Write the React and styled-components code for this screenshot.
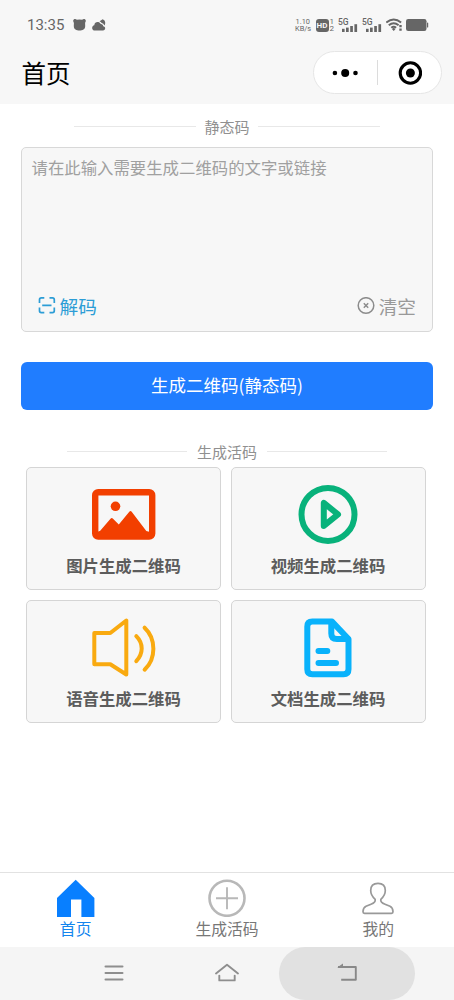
import React, { useState } from "react";
import styled, { createGlobalStyle } from "styled-components";

const GlobalStyle = createGlobalStyle`
  * {
    box-sizing: border-box;
  }

  body {
    margin: 0;
    background: #fff;
    font-family: "Noto Sans CJK SC", sans-serif;
  }

  button {
    padding: 0;
    border: 0;
    background: none;
    font-family: inherit;
  }

  svg {
    display: block;
    flex: none;
  }
`;

const Screen = styled.div`
  display: flex;
  flex-direction: column;
  width: 454px;
  height: 1000px;
  overflow: hidden;
  background: #fff;
`;

// Header
const Header = styled.header`
  height: 104px;
  background: #f7f7f7;
`;

const StatusBar = styled.div`
  display: flex;
  align-items: center;
  height: 50px;
  padding: 0 25px 0 27px;
  color: #666;
  font-family: Roboto, sans-serif;
`;

const Clock = styled.span`
  width: 46px;
  font-size: 15px;
  line-height: 18px;
`;

const CloudIcon = styled.svg`
  margin-left: 6px;
`;

const StatusRight = styled.div`
  display: flex;
  align-items: center;
  margin-left: auto;
`;

const Speed = styled.div`
  width: 20.5px;
  padding-right: 5px;
  font-size: 7.4px;
  line-height: 7px;
  text-align: center;
`;

const HdBadge = styled.span`
  width: 13px;
  height: 13px;
  border-radius: 3px;
  background: #666;
  color: #f7f7f7;
  font-size: 8px;
  font-weight: 700;
  line-height: 13.5px;
  text-align: center;
`;

const SimNumbers = styled.div`
  width: 9.5px;
  padding-left: 1px;
  font-size: 8px;
  line-height: 7px;
`;

const Signal = styled.div`
  width: 24px;
  height: 15px;
  font-size: 8.5px;
  font-weight: 500;
  line-height: 8px;

  svg {
    margin: -2px 0 0 3.5px;
  }
`;

const TitleBar = styled.div`
  display: flex;
  align-items: center;
  justify-content: space-between;
  height: 45px;
  padding: 0 12.5px 0 21.5px;
`;

const Title = styled.h1`
  margin: 0;
  color: #000;
  font-size: 24.5px;
  font-weight: 400;
  line-height: 36px;
`;

const Capsule = styled.div`
  display: flex;
  align-items: center;
  width: 129px;
  height: 43px;
  border: 1px solid #e6e6e6;
  border-radius: 22px;
  background: #fff;
`;

const CapsuleButton = styled.button`
  display: flex;
  align-items: center;
  justify-content: center;
  flex: 1;
  height: 41px;
`;

const CapsuleDivider = styled.span`
  width: 1px;
  height: 25px;
  background: #dcdcdc;
`;

// Content
const Content = styled.main`
  flex: 1;
  padding: 12px 21px 0;
`;

const SectionTitle = styled.div`
  display: flex;
  align-items: center;
  justify-content: center;
  gap: ${({ $gap }) => $gap}px;
  height: 22px;
  color: #909090;
  font-size: 15px;
  line-height: 22px;

  &::before,
  &::after {
    content: "";
    width: ${({ $line }) => $line}px;
    height: 1px;
    margin-top: -1px;
    background: #e8e8e8;
  }
`;

const InputBox = styled.section`
  display: flex;
  flex-direction: column;
  height: 185px;
  margin-top: 9px;
  border: 1.4px solid #d8d8d8;
  border-radius: 5px;
  background: #f7f7f7;
`;

const TextInput = styled.textarea`
  flex: 1;
  padding: 7px 9.5px;
  border: 0;
  outline: 0;
  resize: none;
  background: transparent;
  color: #333;
  font-family: inherit;
  font-size: 16.4px;
  line-height: 24px;

  &::placeholder {
    color: #a0a0a0;
    opacity: 1;
  }
`;

const InputActions = styled.div`
  display: flex;
  justify-content: space-between;
  height: 39px;
  padding: 0 16px 0 15.5px;
`;

const ActionButton = styled.button`
  display: flex;
  align-items: center;
  gap: 4px;
  height: 28px;
  color: ${({ $color }) => $color};
  font-size: 18.7px;
  line-height: 28px;
`;

const SubmitButton = styled.button`
  display: block;
  width: 412px;
  height: 48px;
  margin: 30px 0 31px;
  padding-bottom: 2px;
  border-radius: 6px;
  background: #207dff;
  color: #fff;
  font-size: 17.5px;
  line-height: 26px;
`;

const CardGrid = styled.section`
  display: grid;
  grid-template-columns: 195px 195px;
  grid-auto-rows: 123px;
  gap: 10px 9.5px;
  margin-top: 4px;
  padding-left: 5px;
`;

const Card = styled.button`
  display: flex;
  flex-direction: column;
  align-items: center;
  padding-top: 14px;
  border: 1.4px solid #d5d5d5;
  border-radius: 5px;
  background: #f7f7f7;
  color: #5c5c5c;
  font-size: 16.4px;
  font-weight: 700;
  line-height: 24px;

  svg {
    margin-bottom: 7px;
  }
`;

// Bottom tabs
const TabBar = styled.nav`
  display: grid;
  grid-template-columns: repeat(3, 1fr);
  height: 75px;
  border-top: 1px solid #e2e2e2;
  background: #fff;
`;

const Tab = styled.button`
  display: flex;
  flex-direction: column;
  align-items: center;
  padding-top: 6px;
  color: ${({ $active }) => ($active ? "#1485ee" : "#777")};
  font-size: 15.8px;
  line-height: 23px;
`;

// System navigation
const SystemNav = styled.div`
  display: flex;
  align-items: center;
  height: 53px;
  padding-left: 52px;
  background: #f5f5f5;
`;

const SystemButton = styled.button`
  display: flex;
  align-items: center;
  justify-content: center;
  width: ${({ $width }) => $width}px;
  height: 53px;
  padding-bottom: 1px;
  border-radius: 27px;
  background: ${({ $pressed }) => ($pressed ? "#e1e1e1" : "transparent")};
`;

const SignalBars = () => (
  <svg width="16" height="8" viewBox="0 0 16 8" fill="#666">
    <rect x="0" y="4.8" width="2.6" height="3.2" />
    <rect x="4" y="3.6" width="2.7" height="4.4" />
    <rect x="8.2" y="2" width="2.7" height="6" />
    <rect x="12.4" y="0.2" width="2.7" height="7.8" />
  </svg>
);

const ImageIcon = () => (
  <svg width="64" height="64" viewBox="0 0 64 64">
    <rect x="3.2" y="10.2" width="57" height="44.4" rx="3" fill="none" stroke="#f23f00" strokeWidth="6.4" />
    <circle cx="23.5" cy="24.3" r="4.8" fill="#f23f00" />
    <path
      d="M4 50.5 8.2 48.7 18.5 36.7q1.3-1.2 2.5 0L26.8 42.5 37.3 29.7q1.2-1.2 2.4 0L54.3 49 60 50.5V55.5H4Z"
      fill="#f23f00"
    />
  </svg>
);

const VideoIcon = () => (
  <svg width="64" height="64" viewBox="0 0 64 64" fill="none" stroke="#08b27b" strokeWidth="6">
    <circle cx="32" cy="32.4" r="26.5" />
    <path d="M27.8 20.9V43.9L42 32.4Z" strokeLinejoin="round" />
  </svg>
);

const AudioIcon = () => (
  <svg width="64" height="64" viewBox="0 0 64 64" fill="none" stroke="#f9aa10" strokeWidth="4" strokeLinecap="round" strokeLinejoin="round">
    <path d="M2.3 18H18.3L34.3 5.5V59.5L18.3 49.3H2.3Z" />
    <path d="M44.3 21.2C51.5 28.5 51.5 38.5 44.3 46.2M52.6 12.7C64.3 23.7 64.3 43.7 52.6 54.7" />
  </svg>
);

const DocumentIcon = () => (
  <svg width="64" height="64" viewBox="0 0 64 64" fill="none" stroke="#09b2fb" strokeWidth="6" strokeLinecap="round" strokeLinejoin="round">
    <path d="M36 6.6H16.3Q11.3 6.6 11.3 11.6V54.2Q11.3 59.2 16.3 59.2H47.5Q52.5 59.2 52.5 54.2V24L36 6.6Z" />
    <path d="M35.3 7.5V18.5Q35.3 24 40.8 24H51.8" />
    <path d="M22.5 36H31.3M22.5 48H40" />
  </svg>
);

const cards = [
  { label: "图片生成二维码", Icon: ImageIcon },
  { label: "视频生成二维码", Icon: VideoIcon },
  { label: "语音生成二维码", Icon: AudioIcon },
  { label: "文档生成二维码", Icon: DocumentIcon },
];

const HomeIcon = () => (
  <svg width="40" height="38" viewBox="0 0 40 38">
    <path d="M19.7 0.7 38.4 19V38H25.4V20.5H15V38H1V19Z" fill="#087fff" />
  </svg>
);

const AddIcon = () => (
  <svg width="40" height="38" viewBox="0 0 40 38" fill="none" stroke="#b8b8b8">
    <circle cx="20" cy="19.3" r="17.5" strokeWidth="2.6" />
    <path d="M20 8.3V30.3M9 19.3H31" strokeWidth="1.9" />
  </svg>
);

const UserIcon = () => (
  <svg width="40" height="38" viewBox="0 0 40 38" fill="none" stroke="#999" strokeWidth="1.7" strokeLinejoin="round">
    <path d="M17.2 20.4C14.4 17.8 12.7 14.7 12.7 11.5 12.7 6.8 15.6 4.4 20 4.4S27.3 6.8 27.3 11.5C27.3 14.7 25.6 17.8 22.8 20.4 22.3 22.8 24.2 24.2 27 25.2L32 27.3C34.5 28.6 35 30.7 35 32.8Q35 34.3 33.5 34.3H6.5Q5 34.3 5 32.8C5 30.7 5.5 28.6 8 27.3L13 25.2C15.8 24.2 17.7 22.8 17.2 20.4Z" />
  </svg>
);

const tabs = [
  { label: "首页", Icon: HomeIcon },
  { label: "生成活码", Icon: AddIcon },
  { label: "我的", Icon: UserIcon },
];

const App = () => {
  const [text, setText] = useState("");
  const [active, setActive] = useState(0);

  return (
    <>
      <GlobalStyle />
      <Screen>
        <Header>
          <StatusBar>
            <Clock>13:35</Clock>
            {/* bear and cloud notifications */}
            <svg width="13" height="12" viewBox="0 0 13 12" fill="#666">
              <path d="M.2 1.8C.2-.3 3-.3 3.8 .8Q6.5.4 9.2 .8C10-.3 12.8-.3 12.8 1.8 12.8 2.8 12.2 3.4 12.1 4L12.2 7C12.2 10.5 9.5 11.5 6.5 11.5S.8 10.5.8 7L.9 4C.8 3.4.2 2.8.2 1.8Z" />
            </svg>
            <CloudIcon width="14" height="12" viewBox="0 0 14 12" fill="#666">
              <path d="M3 11.5C-.7 11.5-.6 6.7 2.3 6.3 2.5 2.6 7.2 2 8.7 5.1 10.3 5 11 6 11.2 7.3 14 7.6 13.7 11.5 11 11.5Z" />
              <path d="M7.5 2.2C8.8 1.8 9.8.8 10.5.2 13.4 1 14 4.6 12.4 6.4Q11.7 4.3 9.7 4 9 2.7 7.5 2.2Z" />
            </CloudIcon>
            <StatusRight>
              <Speed>
                1.10
                <br />
                KB/s
              </Speed>
              <HdBadge>HD</HdBadge>
              <SimNumbers>
                1
                <br />2
              </SimNumbers>
              <Signal>
                5G
                <SignalBars />
              </Signal>
              <Signal>
                5G
                <SignalBars />
              </Signal>
              <svg width="20" height="14" viewBox="0 0 20 14" fill="none" stroke="#666" strokeWidth="2">
                <path d="M.3 4.5Q7.7 -1.5 15.1 4.5M2.8 7.2Q7.7 3.2 12.6 7.2M5.3 9.8Q7.7 7.8 10.1 9.8" />
                <path d="M5.9 11 7.7 9.8 9.5 11 7.7 13Z" fill="#666" stroke="none" />
                <path d="M14.5 7V9.2M14.5 10.4V12.8" strokeWidth="2.4" />
              </svg>
              <svg width="23" height="12" viewBox="0 0 23 12" fill="#666">
                <rect x="0" y="0" width="20.5" height="12" rx="2.2" />
                <rect x="21" y="3.5" width="1.2" height="5" rx=".6" />
              </svg>
            </StatusRight>
          </StatusBar>
          <TitleBar>
            <Title>首页</Title>
            <Capsule>
              <CapsuleButton aria-label="更多">
                <svg width="26" height="10" viewBox="0 0 26 10">
                  <circle cx="2.9" cy="5" r="2.3" />
                  <circle cx="13.2" cy="5" r="4" />
                  <circle cx="23.5" cy="5" r="2.3" />
                </svg>
              </CapsuleButton>
              <CapsuleDivider />
              <CapsuleButton aria-label="关闭">
                <svg width="26" height="26" viewBox="0 0 26 26">
                  <circle cx="14.4" cy="13" r="10.2" fill="none" stroke="#000" strokeWidth="3.1" />
                  <circle cx="14.4" cy="13" r="4.5" />
                </svg>
              </CapsuleButton>
            </Capsule>
          </TitleBar>
        </Header>

        <Content>
          <SectionTitle $gap={8.5} $line={122}>
            静态码
          </SectionTitle>
          <InputBox>
            <TextInput
              placeholder="请在此输入需要生成二维码的文字或链接"
              value={text}
              onChange={(e) => setText(e.target.value)}
            />
            <InputActions>
              <ActionButton $color="#2c9dd6">
                <svg width="18" height="18" viewBox="0 0 18 18" fill="none" stroke="currentColor" strokeWidth="1.7">
                  <path d="M1.5 6V2.7Q1.5 .9 3.3 .9H6.3M11.5 .9H14.5Q16.3 .9 16.3 2.7V6M16.3 10.5V13.8Q16.3 15.6 14.5 15.6H11.5M6.3 15.6H3.3Q1.5 15.6 1.5 13.8V10.5M4.2 8.3H13.5" />
                </svg>
                解码
              </ActionButton>
              <ActionButton $color="#999" onClick={() => setText("")}>
                <svg width="18" height="18" viewBox="0 0 18 18" fill="none" stroke="#8c8c8c" strokeWidth="1.5">
                  <circle cx="9" cy="8.5" r="7.8" />
                  <path d="M6.8 6.3 11.2 10.7M11.2 6.3 6.8 10.7" />
                </svg>
                清空
              </ActionButton>
            </InputActions>
          </InputBox>

          <SubmitButton>生成二维码(静态码)</SubmitButton>

          <SectionTitle $gap={9.5} $line={120}>
            生成活码
          </SectionTitle>
          <CardGrid>
            {cards.map(({ label, Icon }) => (
              <Card key={label}>
                <Icon />
                {label}
              </Card>
            ))}
          </CardGrid>
        </Content>

        <TabBar>
          {tabs.map(({ label, Icon }, i) => (
            <Tab key={label} $active={i === active} onClick={() => setActive(i)}>
              <Icon />
              {label}
            </Tab>
          ))}
        </TabBar>

        <SystemNav>
          <SystemButton $width={123} aria-label="菜单">
            <svg width="20" height="16" viewBox="0 0 20 16" stroke="#8e8e8e" strokeWidth="2" strokeLinecap="round">
              <path d="M1.5 1.6H18.5M1.5 8H18.5M1.5 14.4H18.5" />
            </svg>
          </SystemButton>
          <SystemButton $width={104} aria-label="主页">
            <svg width="26" height="20" viewBox="0 0 26 20" fill="none" stroke="#8e8e8e" strokeWidth="1.9" strokeLinecap="round" strokeLinejoin="round">
              <path d="M2 10.5 13 1.8 24 10.5M5.3 12.6V17.4H20.7V12.6" />
            </svg>
          </SystemButton>
          <SystemButton $width={136} $pressed aria-label="返回">
            <svg width="22" height="20" viewBox="0 0 22 20" fill="none" stroke="#888" strokeWidth="1.9" strokeLinejoin="round">
              <path d="M2 4H19.8V16.8H5.2" />
              <path d="M1.2 4.6 7 .4V4.6Z" fill="#888" stroke="none" />
            </svg>
          </SystemButton>
        </SystemNav>
      </Screen>
    </>
  );
};

export default App;
